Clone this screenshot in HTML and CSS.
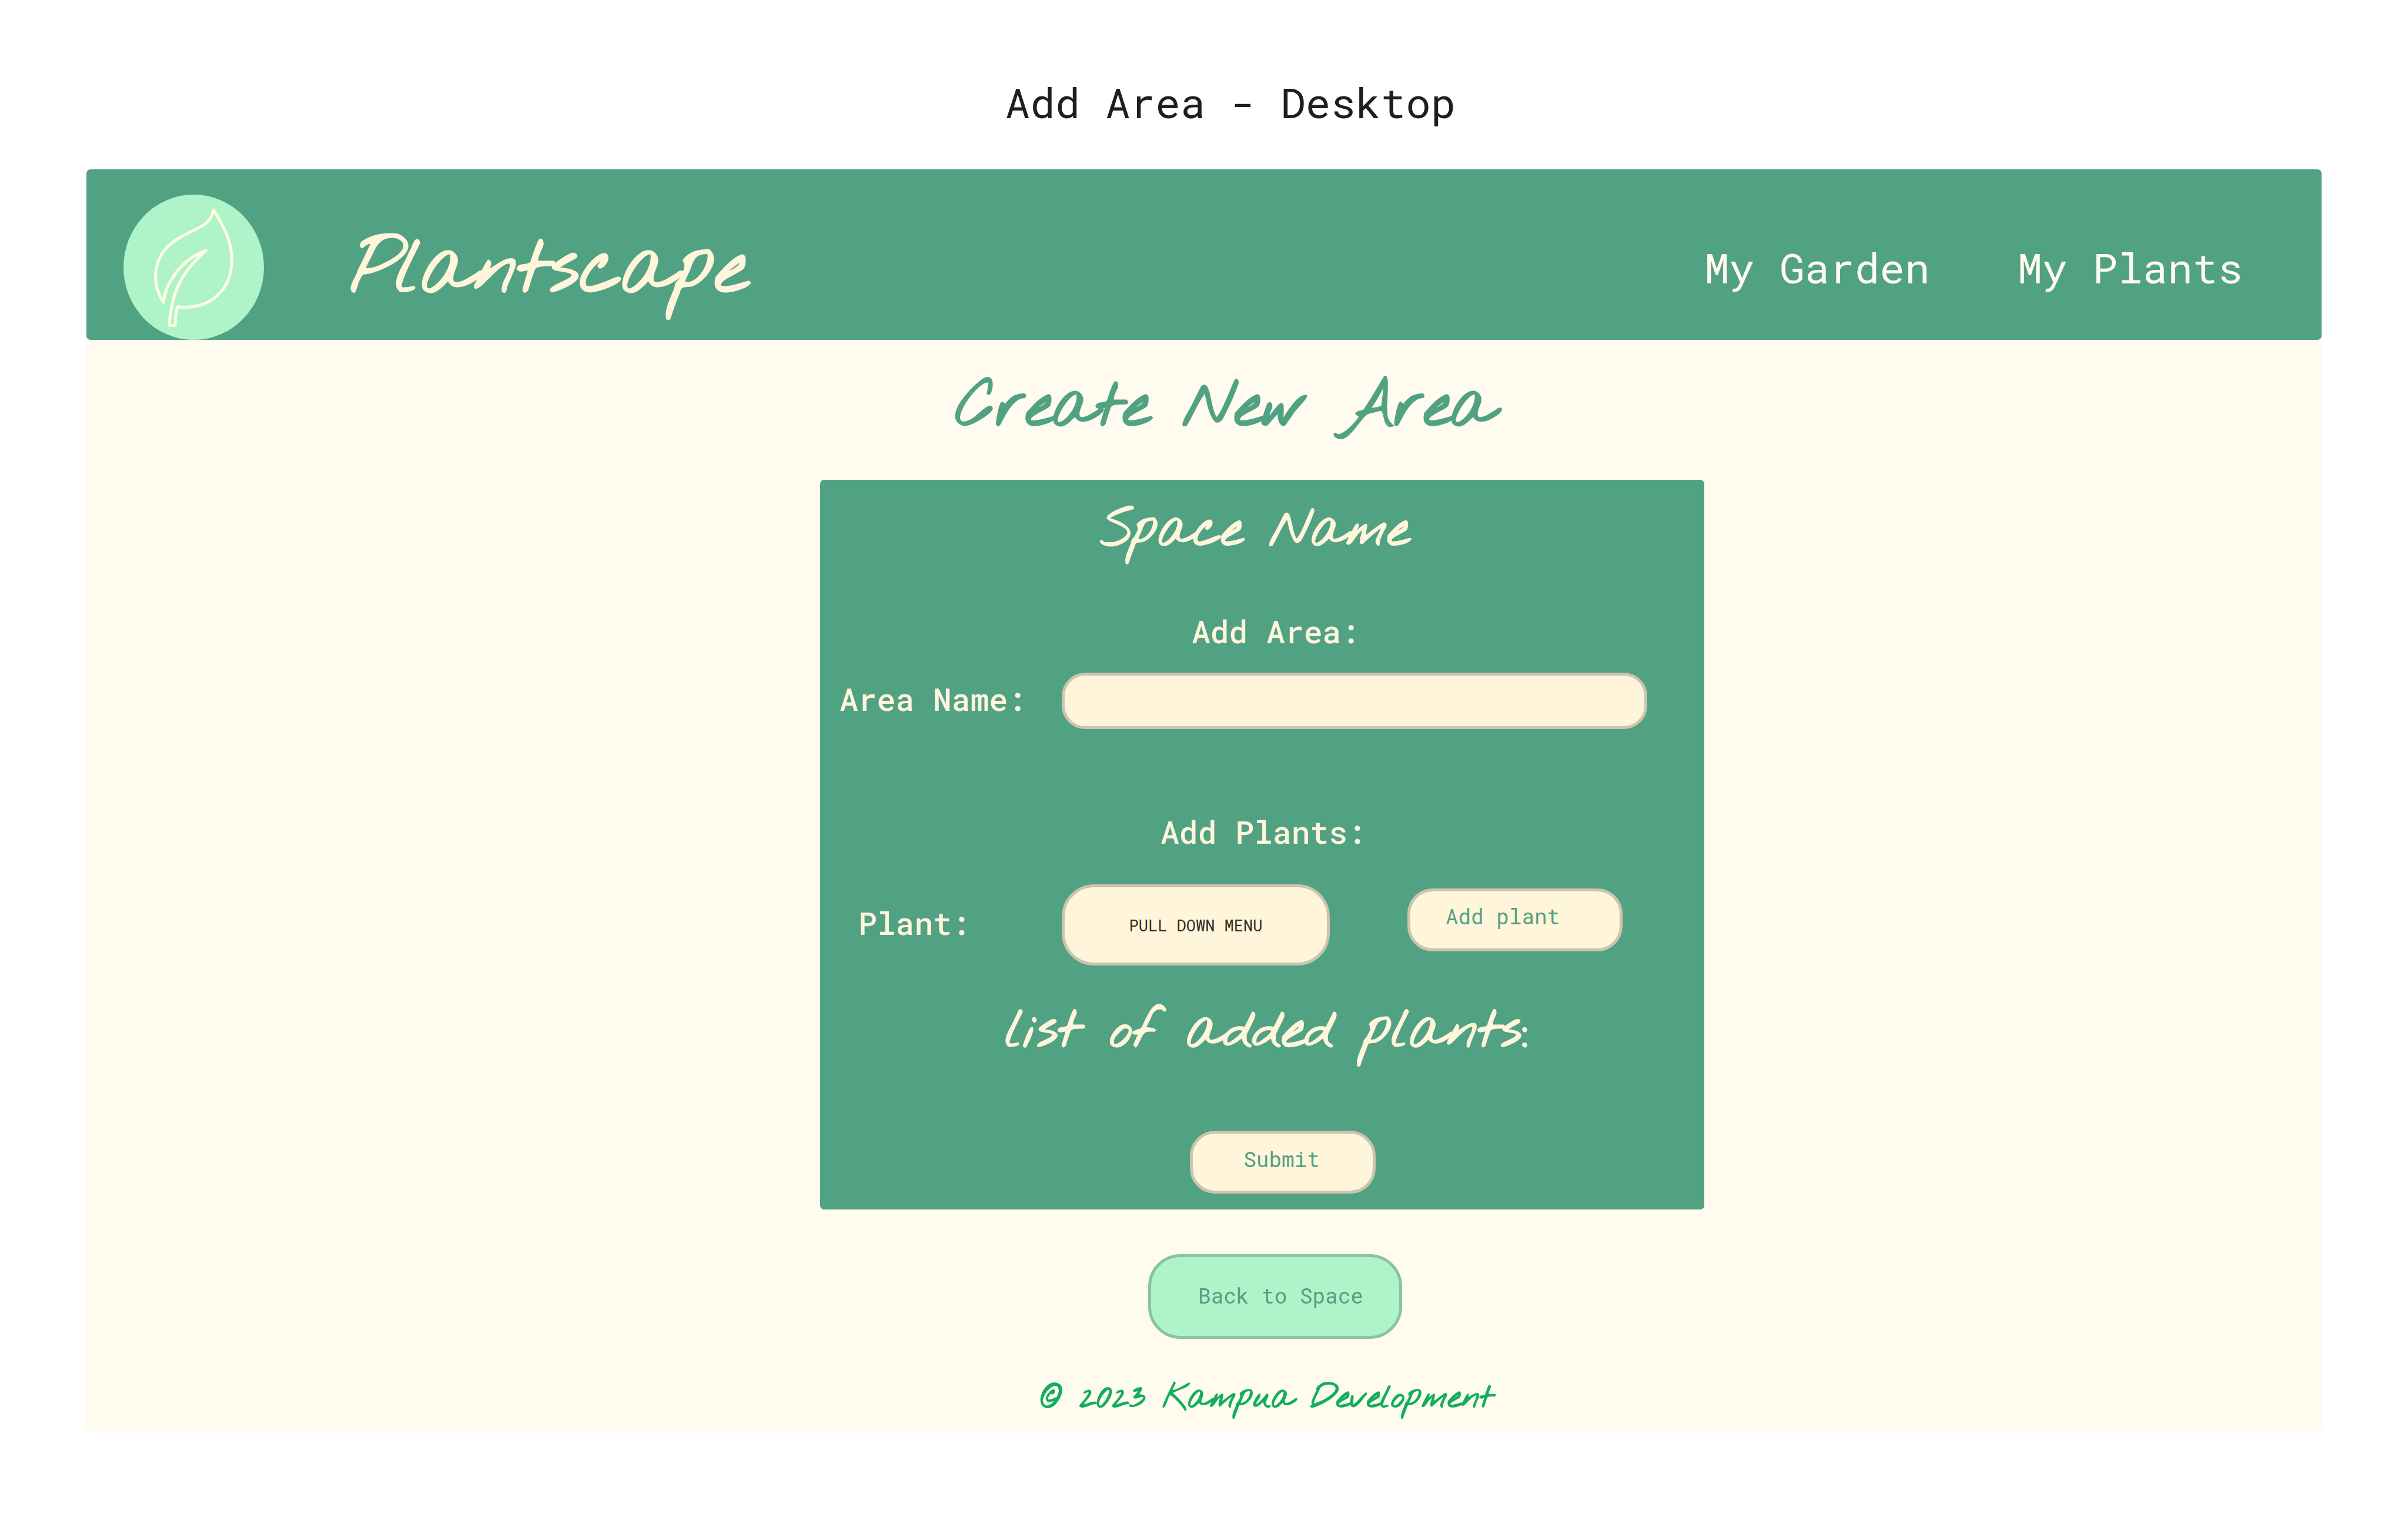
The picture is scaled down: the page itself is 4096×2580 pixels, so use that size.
FILE: index.html
```html
<!DOCTYPE html>
<html lang="en">
<head>
<meta charset="utf-8">
<title>Add Area - Desktop</title>
<link rel="stylesheet" href="styles.css">
</head>
<body>
<h1 class="board-title">Add Area - Desktop</h1>
<div class="page">
  <header class="header">
    <svg class="logo" viewBox="282 271 932 1204" preserveAspectRatio="none" role="img" aria-label="Leaf">
      <ellipse class="logo-disc" cx="748" cy="873" rx="466" ry="602"/>
      <path class="logo-leaf" d="M880 398C870 440 860 490 808 527C755 567 690 595 620 655C535 725 495 845 495 945C495 1030 515 1105 548 1163C553 1100 570 1030 610 955C665 850 740 775 829 735C770 800 715 870 670 965C615 1085 597 1200 585 1356L625 1356C626 1300 630 1245 640 1202C730 1210 810 1198 880 1132C955 1063 1001 960 1001 810C1001 660 945 530 880 398Z"/>
    </svg>
    <span class="brand">Plantscape</span>
    <nav class="nav">
      <a href="#garden">My Garden</a>
      <a href="#plants">My Plants</a>
    </nav>
  </header>
  <main class="main">
    <h2 class="heading">Create New Area</h2>
    <form class="card">
      <h3 class="script space-name">Space Name</h3>
      <h4 class="section add-area">Add Area:</h4>
      <div class="row">
        <label class="label" for="area-name">Area Name:</label>
        <input class="field area-input" id="area-name" type="text">
      </div>
      <h4 class="section add-plants">Add Plants:</h4>
      <div class="row">
        <label class="label plant-label" for="plant">Plant:</label>
        <select class="field plant-select" id="plant">
          <option>PULL DOWN MENU</option>
        </select>
        <button class="field button add-button" type="button">Add plant</button>
      </div>
      <h3 class="script added">list of added plants:</h3>
      <button class="field button submit" type="submit">Submit</button>
    </form>
    <button class="field back" type="button">Back to Space</button>
    <footer class="footer">© 2023 Kampua Development</footer>
  </main>
</div>
</body>
</html>
```
FILE: styles.css
```css
:root {
  --green: #51a183;
  --cream: #fff5db;
  --paper: #fffbee;
  --mint: #aef4c8;
  --ink: #1e1e1e;
  --mono: "Roboto Mono", "DejaVu Sans Mono", monospace;
  --script: "Nothing You Could Do", Caveat, Lato, cursive;
}

* {
  box-sizing: border-box;
}

body {
  margin: 0;
  padding: 124px 147px 147px;
  background: #fff;
  font-family: var(--mono);
}

h1, h2, h3, h4 {
  margin: 0;
  font-weight: 400;
}

.board-title {
  margin-bottom: 64px;
  padding-left: 90px;
  color: var(--ink);
  font-size: 71px;
  line-height: 100px;
  text-align: center;
}

.page {
  background: var(--paper);
}

.header {
  display: flex;
  align-items: center;
  padding: 43px 134px 0 63px;
  border-radius: 7px;
  background: var(--green);
}

.logo {
  width: 239px;
  height: 247px;
  margin-right: 147px;
}

.logo-disc {
  fill: var(--mint);
}

.logo-leaf {
  fill: none;
  stroke: #fffedf;
  stroke-width: 5px;
  stroke-linejoin: round;
  vector-effect: non-scaling-stroke;
}

.brand {
  padding-top: 13px;
  color: var(--cream);
  font: 400 131px/160px var(--script);
  -webkit-text-stroke: 4px currentColor;
}

.nav {
  display: flex;
  gap: 149px;
  margin-left: auto;
}

.nav a {
  color: var(--paper);
  font-size: 71px;
  text-decoration: none;
}

.main {
  display: flex;
  flex-direction: column;
  align-items: center;
  padding: 36px 0 21px 198px;
}

.heading {
  margin-bottom: 42px;
  padding-right: 126px;
  color: var(--green);
  font: 400 108px/160px var(--script);
  -webkit-text-stroke: 4px currentColor;
}

.card {
  display: flex;
  flex-direction: column;
  align-items: center;
  width: 100%;
  max-width: 1504px;
  padding: 28px 97px 27px 33px;
  border-radius: 7px;
  background: var(--green);
}

.script {
  color: var(--cream);
  font: 400 87px/120px var(--script);
  -webkit-text-stroke: 3px currentColor;
}

.space-name {
  margin-bottom: 77px;
  padding-left: 38px;
}

.section,
.label {
  color: var(--cream);
  font-size: 53px;
  font-weight: 500;
  line-height: 64px;
}

.add-area {
  margin-bottom: 39px;
  padding-left: 110px;
}

.add-plants {
  margin: 142px 0 58px;
  padding-left: 68px;
}

.row {
  display: flex;
  align-items: center;
  width: 100%;
}

.label {
  width: 378px;
  padding-bottom: 8px;
}

.plant-label {
  padding-left: 32px;
}

.field {
  margin: 0;
  border: 5px solid #ccc4af;
  background: var(--cream);
  font-family: var(--mono);
}

.area-input {
  flex: 1;
  min-width: 0;
  height: 96px;
  padding: 0 32px;
  border-radius: 40px;
  color: var(--ink);
  font-size: 36px;
}

.plant-select {
  width: 456px;
  height: 138px;
  margin-right: 132px;
  border-radius: 55px;
  color: #332d26;
  font-size: 27px;
  text-align: center;
  text-align-last: center;
  appearance: none;
}

.button {
  height: 107px;
  border-radius: 43px;
  color: var(--green);
  font-size: 36px;
}

.add-button {
  width: 366px;
  margin-bottom: 18px;
  padding: 0 42px 12px 0;
}

.added {
  margin: 53px 0 108px;
  padding-left: 80px;
  font-size: 93px;
}

.submit {
  width: 316px;
  margin-left: 134px;
  padding: 0 4px 12px 0;
}

.back {
  width: 432px;
  height: 144px;
  margin: 76px 0 66px 43px;
  padding: 0 0 4px 20px;
  border-color: #8bc3a0;
  border-radius: 55px;
  background: var(--mint);
  color: var(--green);
  font-size: 36px;
}

.footer {
  padding-left: 16px;
  color: #14ae5c;
  font: 400 55px/70px var(--script);
  -webkit-text-stroke: 2px currentColor;
}
```
